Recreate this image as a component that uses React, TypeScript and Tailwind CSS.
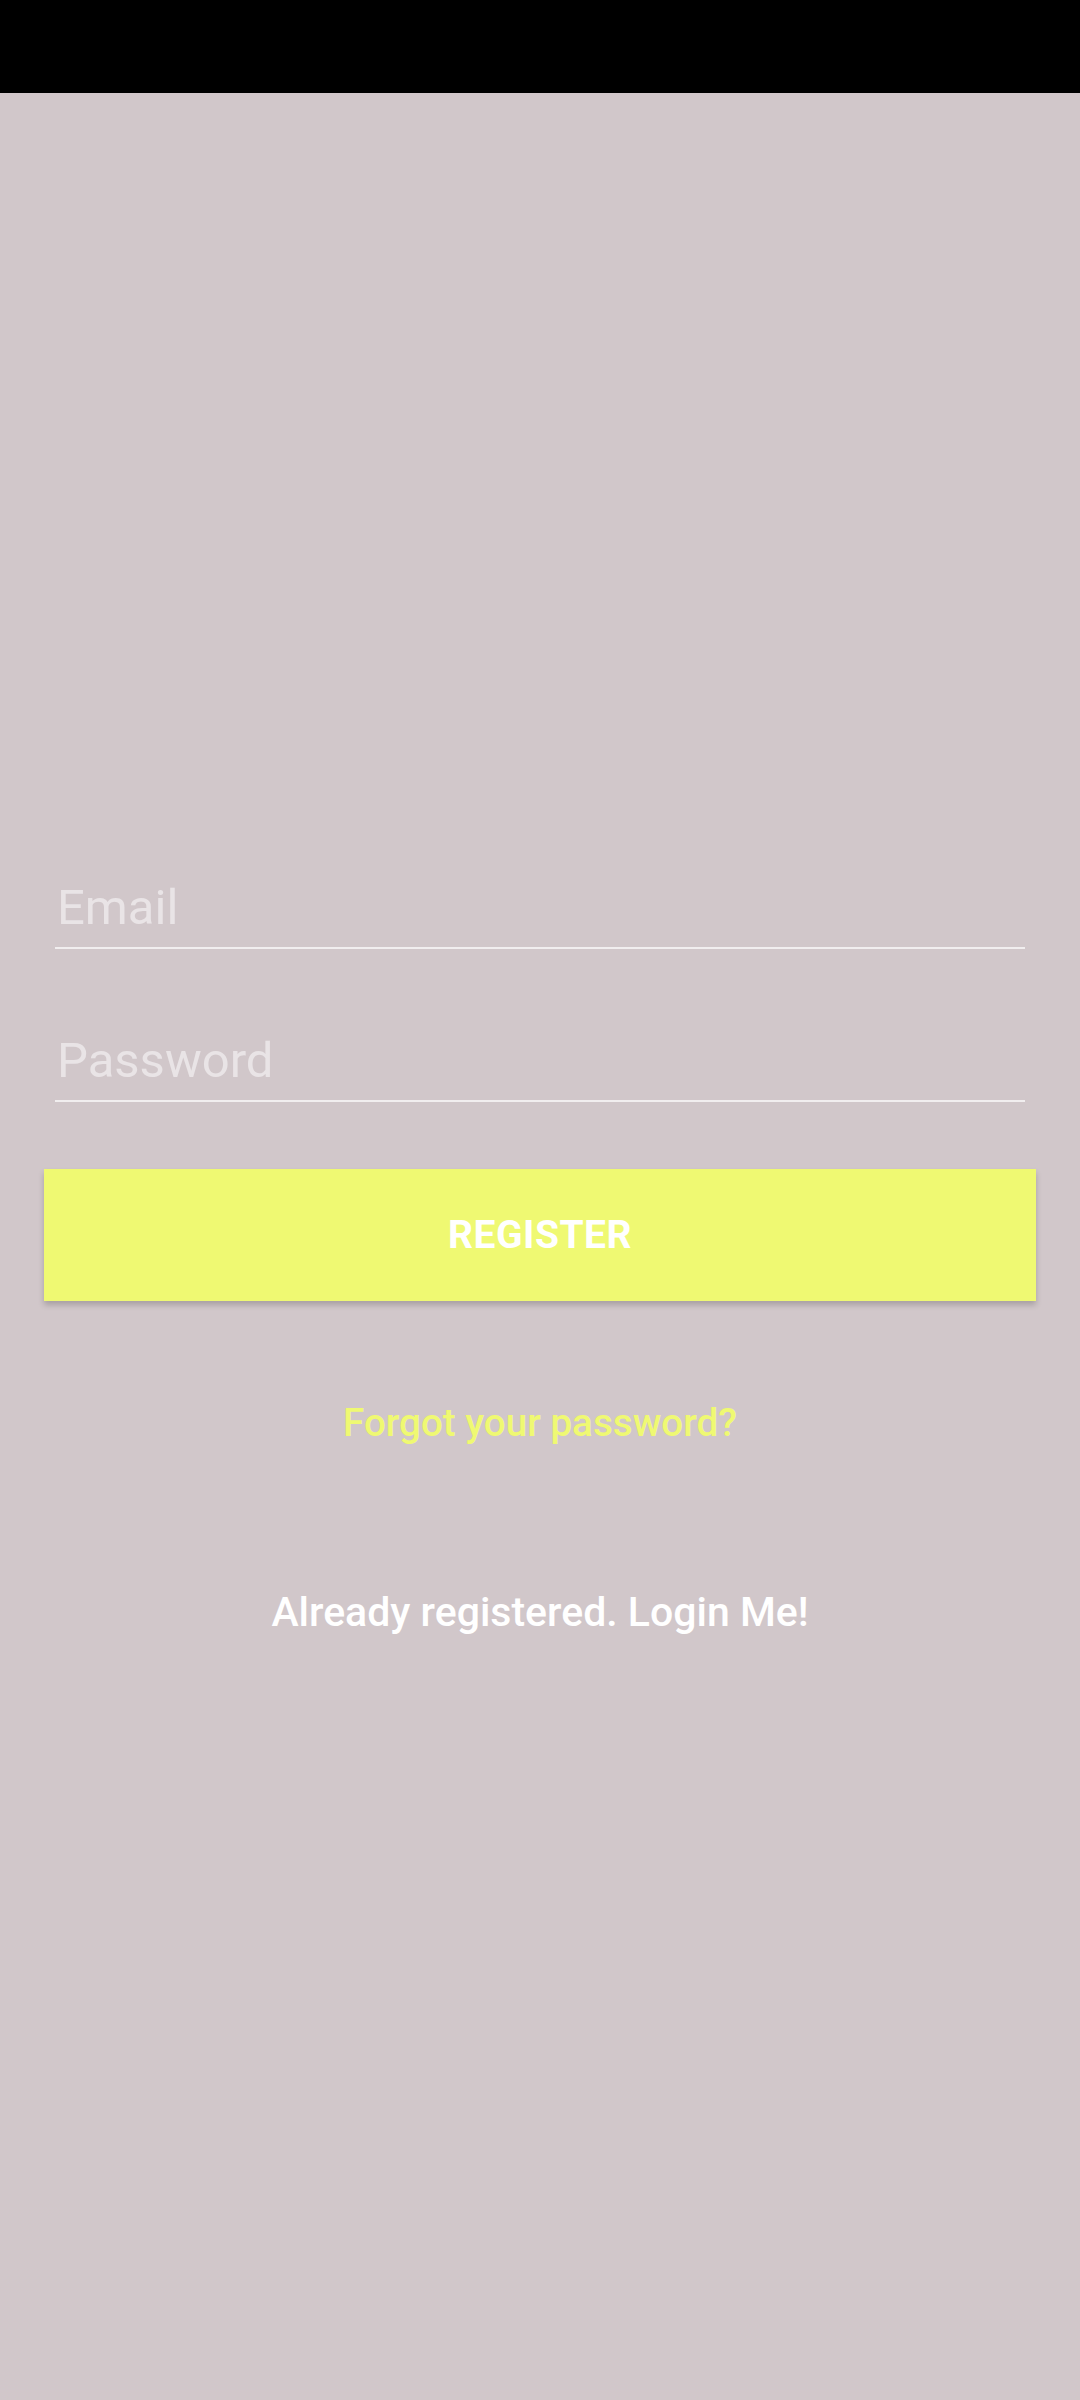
import React from 'react';

const font = { fontFamily: 'Roboto, "Noto Sans", sans-serif' };

const Field = ({ hint }: { hint: string }) => (
  <div className="border-b-2 border-[#f1eeef] pb-[9px]">
    <div className="text-[49px] leading-[60px] text-[#e9e4e6] pl-[2px]">{hint}</div>
  </div>
);

export default function App() {
  return (
    <div className="min-h-[2400px] w-[1080px] bg-[#d1c7ca] flex flex-col" style={font}>
      <div className="h-[93px] bg-black" />
      <div className="flex flex-col pt-[785px]">
        <div className="px-[55px] flex flex-col gap-[82px]">
          <Field hint="Email" />
          <Field hint="Password" />
        </div>
        <div className="px-[44px] mt-[67px]">
          <button className="w-full h-[132px] bg-[#eff972] flex items-center justify-center text-white text-[39px] font-bold tracking-[0.5px] shadow-[0_4px_6px_rgba(0,0,0,0.2)]">
            REGISTER
          </button>
        </div>
        <div className="mt-[99px] text-center text-[38.6px] leading-[46px] text-[#eff972] font-medium">
          Forgot your password?
        </div>
        <div className="mt-[142px] text-center text-[41px] leading-[48px] text-white font-medium">
          Already registered. Login Me!
        </div>
      </div>
    </div>
  );
}
